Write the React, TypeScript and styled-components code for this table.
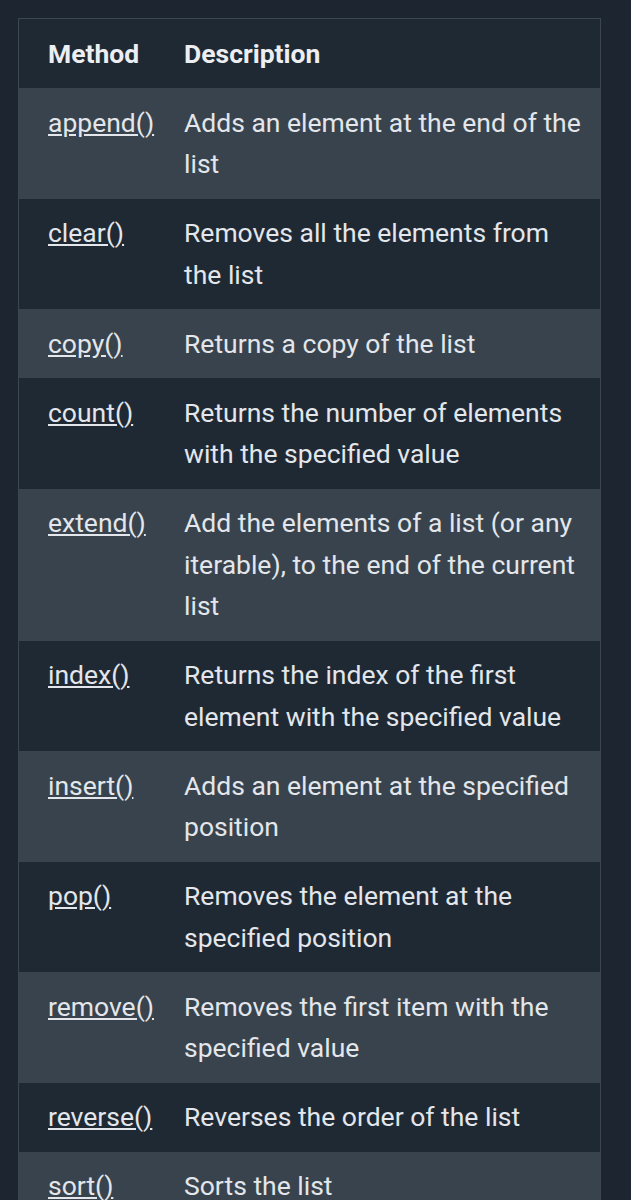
import styled, { createGlobalStyle } from "styled-components";

const colors = {
  page: "#1d2630",
  dark: "#1f2934",
  light: "#38434d",
  border: "#3b4651",
  text: "#e3e6ea",
};

const GlobalStyle = createGlobalStyle`
  html, body {
    margin: 0;
    padding: 0;
    background: ${colors.page};
  }
  body {
    font-family: Roboto, "Liberation Sans", sans-serif;
  }
`;

const Page = styled.div`
  padding: 18px 30px 0 18px;
  min-height: 1200px;
  box-sizing: border-box;
  background: ${colors.page};
`;

const Table = styled.div`
  border: 1px solid ${colors.border};
  border-bottom: none;
`;

const Row = styled.div<{ $shade: "dark" | "light" }>`
  display: grid;
  grid-template-columns: 136px 1fr;
  padding: 13.75px 12px 13.75px 29px;
  background: ${(p) => (p.$shade === "light" ? colors.light : colors.dark)};
  color: ${colors.text};
  font-size: 26.5px;
  line-height: 41.5px;
`;

const HeadCell = styled.div`
  font-weight: 700;
  color: #eceef1;
`;

const MethodLink = styled.a`
  color: ${colors.text};
  text-decoration: underline;
  text-underline-offset: 2px;
`;

const Desc = styled.div``;

const methods = [
  ["append()", "Adds an element at the end of the list"],
  ["clear()", "Removes all the elements from the list"],
  ["copy()", "Returns a copy of the list"],
  ["count()", "Returns the number of elements with the specified value"],
  ["extend()", "Add the elements of a list (or any iterable), to the end of the current list"],
  ["index()", "Returns the index of the first element with the specified value"],
  ["insert()", "Adds an element at the specified position"],
  ["pop()", "Removes the element at the specified position"],
  ["remove()", "Removes the first item with the specified value"],
  ["reverse()", "Reverses the order of the list"],
  ["sort()", "Sorts the list"],
];

export default function App() {
  return (
    <>
      <GlobalStyle />
      <Page>
        <Table>
          <Row $shade="dark">
            <HeadCell>Method</HeadCell>
            <HeadCell>Description</HeadCell>
          </Row>
          {methods.map(([name, desc], i) => (
            <Row key={name} $shade={i % 2 === 0 ? "light" : "dark"}>
              <div>
                <MethodLink href="#">{name}</MethodLink>
              </div>
              <Desc>{desc}</Desc>
            </Row>
          ))}
        </Table>
      </Page>
    </>
  );
}
